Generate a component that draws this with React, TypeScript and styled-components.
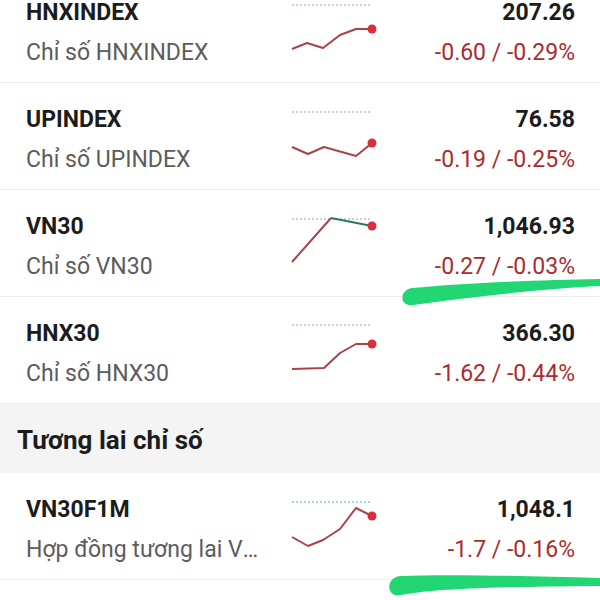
import React from "react";
import styled, { createGlobalStyle } from "styled-components";

const GlobalStyle = createGlobalStyle`
    html, body {
        margin: 0;
        padding: 0;
        background: #ffffff;
    }
    body {
        font-family: Roboto, "Noto Sans", "Liberation Sans", sans-serif;
    }
`;

const Page = styled.main`
    position: relative;
    width: 600px;
    height: 600px;
    overflow: hidden;
    background: #ffffff;
`;

const List = styled.div`
    margin-top: -24px;
    display: flex;
    flex-direction: column;
`;

const Row = styled.div`
    display: grid;
    grid-template-columns: 236px 92px 1fr;
    height: 106px;
    padding: 0 25px 0 26px;
    border-bottom: 1px solid #ececec;
`;

const Left = styled.div`
    display: flex;
    flex-direction: column;
    gap: 12px;
    padding-top: 23px;
    min-width: 0;
`;

const Right = styled.div`
    display: flex;
    flex-direction: column;
    align-items: flex-end;
    gap: 12px;
    padding-top: 23px;
`;

const Chart = styled.svg`
    margin-left: 26px;
    display: block;
`;

const Title = styled.div`
    font-size: 23px;
    line-height: 28px;
    font-weight: 700;
    color: #1c1c1c;
`;

const Sub = styled.div`
    font-size: 23px;
    line-height: 28px;
    color: #5c5c5c;
    white-space: nowrap;
    overflow: hidden;
    text-overflow: ellipsis;
`;

const Price = styled.div`
    font-size: 23px;
    line-height: 28px;
    font-weight: 700;
    color: #1c1c1c;
`;

const Change = styled.div`
    font-size: 23px;
    line-height: 28px;
    color: #a92c2e;
`;

const SectionHeader = styled.div`
    height: 69px;
    display: flex;
    align-items: center;
    padding: 2px 0 0 17px;
    box-sizing: border-box;
    background: #f4f4f4;
    font-size: 26px;
    font-weight: 700;
    color: #1c1c1c;
`;

const Marks = styled.svg`
    position: absolute;
    top: 0;
    left: 0;
    pointer-events: none;
`;

type Seg = { pts: [number, number][]; color: string };

type Item = {
    code: string;
    name: string;
    price: string;
    change: string;
    refY: number;
    refColor: string;
    segs: Seg[];
};

const RED_LINE = "#a8434b";
const GREEN_LINE = "#2b7a5a";

const indices: Item[] = [
    {
        code: "HNXINDEX",
        name: "Chỉ số HNXINDEX",
        price: "207.26",
        change: "-0.60 / -0.29%",
        refY: 29,
        refColor: "#8aa6ad",
        segs: [{ pts: [[4, 73], [19, 67], [35, 72], [52, 59], [68, 53], [84, 53]], color: RED_LINE }],
    },
    {
        code: "UPINDEX",
        name: "Chỉ số UPINDEX",
        price: "76.58",
        change: "-0.19 / -0.25%",
        refY: 29,
        refColor: "#8aa6ad",
        segs: [{ pts: [[4, 64], [20, 71], [36, 64], [68, 73], [84, 60]], color: RED_LINE }],
    },
    {
        code: "VN30",
        name: "Chỉ số VN30",
        price: "1,046.93",
        change: "-0.27 / -0.03%",
        refY: 29,
        refColor: "#8aa6ad",
        segs: [
            { pts: [[4, 72], [43, 28]], color: RED_LINE },
            { pts: [[43, 28], [84, 36]], color: GREEN_LINE },
        ],
    },
    {
        code: "HNX30",
        name: "Chỉ số HNX30",
        price: "366.30",
        change: "-1.62 / -0.44%",
        refY: 28,
        refColor: "#8aa6ad",
        segs: [{ pts: [[4, 72], [36, 71], [52, 56], [68, 47], [84, 47]], color: RED_LINE }],
    },
];

const futures: Item[] = [
    {
        code: "VN30F1M",
        name: "Hợp đồng tương lai VN30",
        price: "1,048.1",
        change: "-1.7 / -0.16%",
        refY: 29,
        refColor: "#5fa7b0",
        segs: [{ pts: [[4, 64], [20, 73], [35, 67], [52, 56], [68, 35], [84, 43]], color: RED_LINE }],
    },
];

function Spark({ item }: { item: Item }) {
    const last = item.segs[item.segs.length - 1].pts;
    const end = last[last.length - 1];
    return (
        <Chart width="92" height="106" viewBox="0 0 92 106">
            <line
                x1="4"
                y1={item.refY}
                x2="84"
                y2={item.refY}
                stroke={item.refColor}
                strokeWidth="1"
                strokeDasharray="2 2"
            />
            {item.segs.map((s, i) => (
                <polyline
                    key={i}
                    points={s.pts.map((p) => p.join(",")).join(" ")}
                    fill="none"
                    stroke={s.color}
                    strokeWidth="2"
                    strokeLinejoin="round"
                />
            ))}
            <circle cx={end[0]} cy={end[1]} r="4.5" fill="#d7303a" />
        </Chart>
    );
}

function IndexRow({ item }: { item: Item }) {
    return (
        <Row>
            <Left>
                <Title>{item.code}</Title>
                <Sub>{item.name}</Sub>
            </Left>
            <Spark item={item} />
            <Right>
                <Price>{item.price}</Price>
                <Change>{item.change}</Change>
            </Right>
        </Row>
    );
}

export default function App() {
    return (
        <Page>
            <GlobalStyle />
            <List>
                {indices.map((it) => (
                    <IndexRow key={it.code} item={it} />
                ))}
                <SectionHeader>Tương lai chỉ số</SectionHeader>
                {futures.map((it) => (
                    <IndexRow key={it.code} item={it} />
                ))}
            </List>
            <Marks width="600" height="600" viewBox="0 0 600 600">
                <path
                    d="M 600 279 C 540 280, 460 283, 412 288 C 399 290, 399 307, 413 305 C 460 298, 540 289, 600 286 Z"
                    fill="#22d674"
                />
                <path
                    d="M 600 578 C 520 576, 450 574, 400 576 C 385 578, 386 598, 401 595 C 430 590, 470 587, 600 586 Z"
                    fill="#22d674"
                />
            </Marks>
        </Page>
    );
}
